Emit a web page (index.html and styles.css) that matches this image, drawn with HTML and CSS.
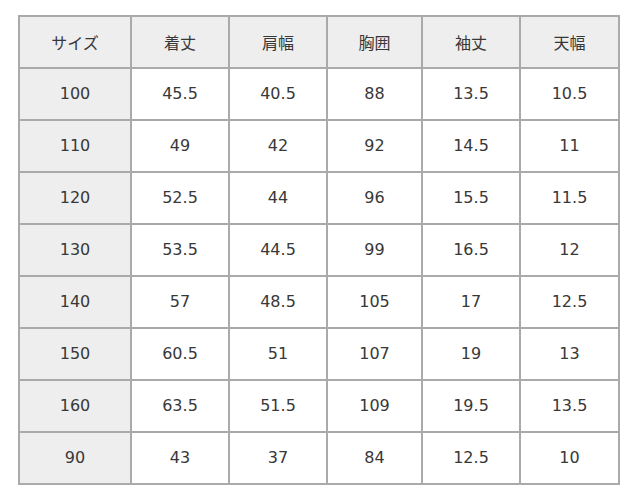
FILE: index.html
```html
<!DOCTYPE html>
<html lang="ja">
<head>
<meta charset="utf-8">
<link rel="stylesheet" href="styles.css">
</head>
<body>
<table class="size-table">
  <colgroup>
    <col class="c-size">
    <col class="c-a">
    <col class="c-b">
    <col class="c-c">
    <col class="c-d">
    <col class="c-e">
  </colgroup>
  <thead>
    <tr><th>サイズ</th><th>着丈</th><th>肩幅</th><th>胸囲</th><th>袖丈</th><th>天幅</th></tr>
  </thead>
  <tbody>
    <tr><th>100</th><td>45.5</td><td>40.5</td><td>88</td><td>13.5</td><td>10.5</td></tr>
    <tr><th>110</th><td>49</td><td>42</td><td>92</td><td>14.5</td><td>11</td></tr>
    <tr><th>120</th><td>52.5</td><td>44</td><td>96</td><td>15.5</td><td>11.5</td></tr>
    <tr><th>130</th><td>53.5</td><td>44.5</td><td>99</td><td>16.5</td><td>12</td></tr>
    <tr><th>140</th><td>57</td><td>48.5</td><td>105</td><td>17</td><td>12.5</td></tr>
    <tr><th>150</th><td>60.5</td><td>51</td><td>107</td><td>19</td><td>13</td></tr>
    <tr><th>160</th><td>63.5</td><td>51.5</td><td>109</td><td>19.5</td><td>13.5</td></tr>
    <tr><th>90</th><td>43</td><td>37</td><td>84</td><td>12.5</td><td>10</td></tr>
  </tbody>
</table>
</body>
</html>
```
FILE: styles.css
```css
html, body {
  margin: 0;
  padding: 0;
  background: #fff;
}
body {
  padding: 15px 0 0 18px;
  font-family: "DejaVu Sans", "Noto Sans CJK JP", sans-serif;
  color: #383838;
}
.size-table {
  border-collapse: collapse;
  table-layout: fixed;
  width: 600px;
  border: 2px solid #aaa;
}
.c-size { width: 112px; }
.c-a { width: 98px; }
.c-b { width: 98px; }
.c-c { width: 95px; }
.c-d { width: 98px; }
.c-e { width: 99px; }
.size-table tr {
  height: 52px;
}
.size-table th,
.size-table td {
  border: 2px solid #aaa;
  text-align: center;
  vertical-align: middle;
  font-size: 16px;
  font-weight: 400;
  padding: 0;
  line-height: 1;
}
.size-table thead th {
  font-family: "Noto Sans CJK JP", sans-serif;
}
.size-table thead th,
.size-table tbody th {
  background: #eee;
}
.size-table td {
  background: #fff;
}
```
